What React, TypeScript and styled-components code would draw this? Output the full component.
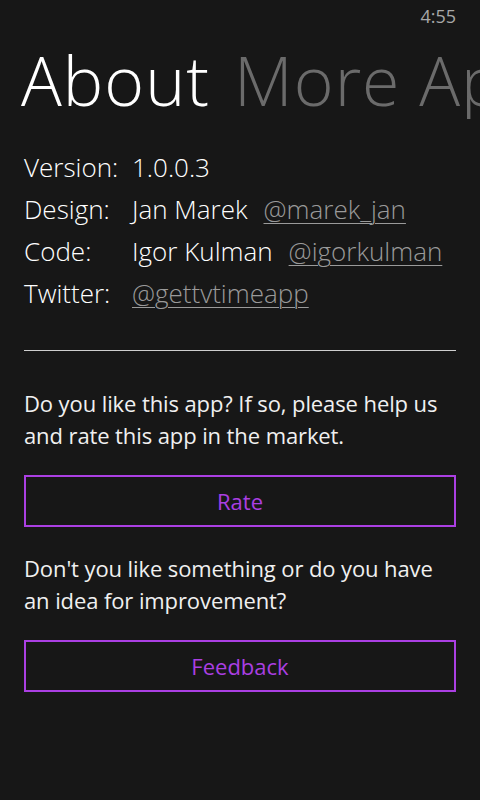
import React from "react";
import styled, { createGlobalStyle } from "styled-components";

const Global = createGlobalStyle`
  html, body { margin: 0; padding: 0; background: #171717; }
  body { font-family: "Open Sans", "Noto Sans", sans-serif; color: #ffffff; }
`;

const Screen = styled.div`
  width: 480px;
  height: 800px;
  background: #171717;
  overflow: hidden;
  display: flex;
  flex-direction: column;
`;

const StatusBar = styled.div`
  height: 32px;
  display: flex;
  justify-content: flex-end;
  align-items: center;
  padding-right: 24px;
  font-size: 18px;
  color: #a8a8a8;
  line-height: 1;
`;

const Pivot = styled.div`
  display: flex;
  gap: 24px;
  white-space: nowrap;
  padding-left: 21px;
  margin-top: 9px;
  height: 78px;
  align-items: flex-start;
  overflow: hidden;
`;

const PivotItem = styled.span<{ $active?: boolean }>`
  font-size: 68px;
  font-weight: 300;
  line-height: 78px;
  letter-spacing: 1px;
  color: ${(p) => (p.$active ? "#ffffff" : "#6b6b6b")};
`;

const Content = styled.div`
  padding: 0 24px;
  display: flex;
  flex-direction: column;
`;

const InfoGrid = styled.div`
  display: grid;
  grid-template-columns: 108px 1fr;
  grid-auto-rows: 42px;
  margin-top: 27px;
  font-size: 26px;
  font-weight: 300;
  align-items: center;
`;

const Label = styled.div`
  color: #ffffff;
`;

const Value = styled.div`
  display: flex;
  gap: 16px;
  color: #ffffff;
`;

const Link = styled.a`
  color: #9a9a9a;
  text-decoration: underline;
  text-decoration-thickness: 1px;
  text-underline-offset: 4px;
`;

const Divider = styled.hr`
  border: none;
  height: 1px;
  background: #cfcfcf;
  margin: 36px 0 0 0;
`;

const Paragraph = styled.p<{ $top: number }>`
  margin: ${(p) => p.$top}px 0 0 0;
  font-size: 22px;
  line-height: 32px;
  letter-spacing: -0.1px;
  color: #f0f0f0;
`;

const ActionButton = styled.button`
  margin-top: 24px;
  height: 52px;
  width: 100%;
  background: transparent;
  border: 2px solid #ab3fe3;
  color: #ab3fe3;
  font-family: "Open Sans", "Noto Sans", sans-serif;
  font-size: 22px;
  cursor: pointer;
`;

export default function App() {
  return (
    <Screen>
      <Global />
      <StatusBar>4:55</StatusBar>
      <Pivot>
        <PivotItem $active>About</PivotItem>
        <PivotItem>More Apps</PivotItem>
      </Pivot>
      <Content>
        <InfoGrid>
          <Label>Version:</Label>
          <Value>1.0.0.3</Value>
          <Label>Design:</Label>
          <Value>
            <span>Jan Marek</span>
            <Link>@marek_jan</Link>
          </Value>
          <Label>Code:</Label>
          <Value>
            <span>Igor Kulman</span>
            <Link>@igorkulman</Link>
          </Value>
          <Label>Twitter:</Label>
          <Value>
            <Link>@gettvtimeapp</Link>
          </Value>
        </InfoGrid>
        <Divider />
        <Paragraph $top={36}>
          Do you like this app? If so, please help us and rate this app in the market.
        </Paragraph>
        <ActionButton>Rate</ActionButton>
        <Paragraph $top={25}>
          Don't you like something or do you have an idea for improvement?
        </Paragraph>
        <ActionButton>Feedback</ActionButton>
      </Content>
    </Screen>
  );
}
